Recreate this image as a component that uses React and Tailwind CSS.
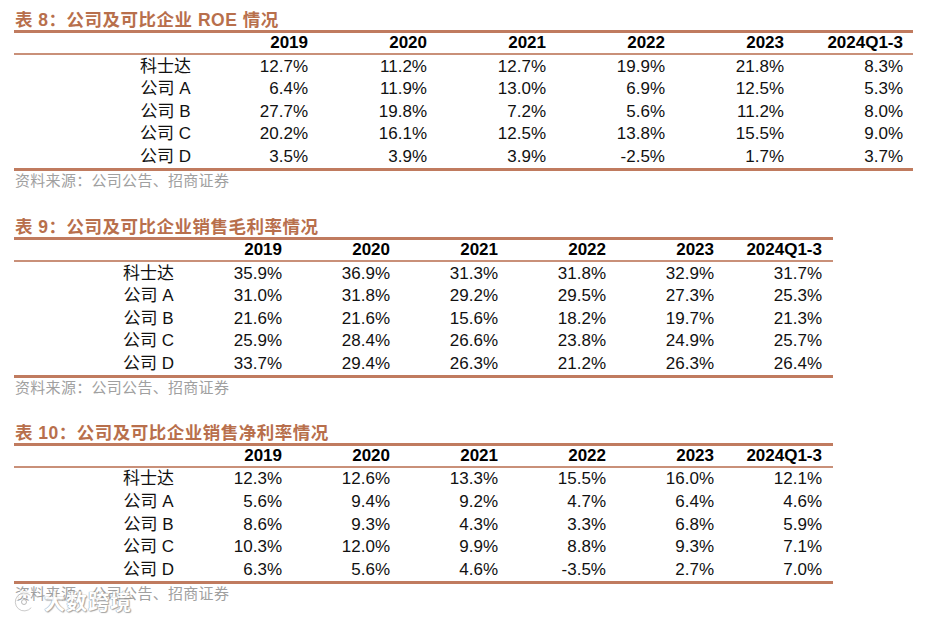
import React from "react";

const years = ["2019", "2020", "2021", "2022", "2023", "2024Q1-3"];
const names = ["科士达", "公司 A", "公司 B", "公司 C", "公司 D"];

const tables = [
  {
    title: "表 8：公司及可比企业 ROE 情况",
    width: "w-[899px]",
    label: "w-[175px]",
    labelInner: "ml-[126px]",
    col: "w-[119px]",
    gap: "mt-[10px]",
    rows: [
      ["12.7%", "11.2%", "12.7%", "19.9%", "21.8%", "8.3%"],
      ["6.4%", "11.9%", "13.0%", "6.9%", "12.5%", "5.3%"],
      ["27.7%", "19.8%", "7.2%", "5.6%", "11.2%", "8.0%"],
      ["20.2%", "16.1%", "12.5%", "13.8%", "15.5%", "9.0%"],
      ["3.5%", "3.9%", "3.9%", "-2.5%", "1.7%", "3.7%"],
    ],
  },
  {
    title: "表 9：公司及可比企业销售毛利率情况",
    width: "w-[819px]",
    label: "w-[160px]",
    labelInner: "ml-[109px]",
    col: "w-[108px]",
    gap: "mt-[26px]",
    rows: [
      ["35.9%", "36.9%", "31.3%", "31.8%", "32.9%", "31.7%"],
      ["31.0%", "31.8%", "29.2%", "29.5%", "27.3%", "25.3%"],
      ["21.6%", "21.6%", "15.6%", "18.2%", "19.7%", "21.3%"],
      ["25.9%", "28.4%", "26.6%", "23.8%", "24.9%", "25.7%"],
      ["33.7%", "29.4%", "26.3%", "21.2%", "26.3%", "26.4%"],
    ],
  },
  {
    title: "表 10：公司及可比企业销售净利率情况",
    width: "w-[819px]",
    label: "w-[160px]",
    labelInner: "ml-[109px]",
    col: "w-[108px]",
    gap: "mt-[25px]",
    rows: [
      ["12.3%", "12.6%", "13.3%", "15.5%", "16.0%", "12.1%"],
      ["5.6%", "9.4%", "9.2%", "4.7%", "6.4%", "4.6%"],
      ["8.6%", "9.3%", "4.3%", "3.3%", "6.8%", "5.9%"],
      ["10.3%", "12.0%", "9.9%", "8.8%", "9.3%", "7.1%"],
      ["6.3%", "5.6%", "4.6%", "-3.5%", "2.7%", "7.0%"],
    ],
  },
];

const DataTable = ({ t }) => (
  <div className={`${t.gap} ${t.width} ml-[14px]`}>
    {/* title */}
    <div className="h-[20px] leading-[20px] pl-[1px] text-[17.5px] tracking-[0.5px] font-bold text-[#b86f4c] whitespace-nowrap">
      {t.title}
    </div>
    <div className="h-[3px] bg-[#c07b5f]" />

    {/* header */}
    <div className="flex h-[20px] items-center text-[17px] font-bold text-black">
      <div className={t.label} />
      {years.map((y) => (
        <div key={y} className={`${t.col} text-right`}>
          {y}
        </div>
      ))}
    </div>
    <div className="h-[2px] bg-[#c99079]" />

    {/* rows */}
    {t.rows.map((r, i) => (
      <div key={i} className="flex h-[22.6px] items-center text-[17px] text-[#111]">
        <div className={t.label}>
          <div className={`${t.labelInner} w-[51px] text-center whitespace-nowrap`}>
            {names[i]}
          </div>
        </div>
        {r.map((v, j) => (
          <div key={j} className={`${t.col} text-right`}>
            {v}
          </div>
        ))}
      </div>
    ))}
    <div className="h-[3px] bg-[#c07b5f]" />

    {/* source */}
    <div className="h-[20px] leading-[20px] pl-[1px] text-[15px] tracking-[0.3px] text-[#a0a0a0] whitespace-nowrap">
      资料来源：公司公告、招商证券
    </div>
  </div>
);

export default function App() {
  return (
    <div
      className="relative w-[933px] h-[618px] overflow-hidden bg-white"
      style={{ fontFamily: '"Liberation Sans", "Noto Sans CJK SC", sans-serif' }}
    >
      {tables.map((t, i) => (
        <DataTable key={i} t={t} />
      ))}

      {/* watermark */}
      <div className="absolute left-[10px] top-[586px] flex items-center gap-[6px] text-white opacity-85 [text-shadow:0_0_1px_#888,0_0_1px_#888,1px_1px_1px_#999]">
        <svg width="28" height="24" viewBox="0 0 28 24" fill="none">
          <path
            d="M20 5 A9 9 0 1 0 21 18"
            stroke="#fff"
            strokeWidth="4"
            strokeLinecap="round"
          />
          <path
            d="M20 5 A9 9 0 1 0 21 18"
            stroke="#999"
            strokeWidth="1"
            strokeLinecap="round"
            opacity="0.6"
          />
          <circle cx="14" cy="12" r="2.5" fill="#fff" stroke="#999" strokeWidth="0.8" />
        </svg>
        <span className="text-[21px] font-bold tracking-[1px]">大数跨境</span>
      </div>
    </div>
  );
}
